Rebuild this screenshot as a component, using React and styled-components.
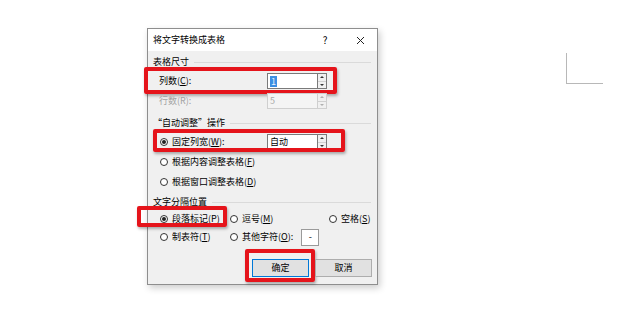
import React from "react";
import styled, { createGlobalStyle } from "styled-components";

const GlobalStyle = createGlobalStyle`
  html, body {
    margin: 0;
    padding: 0;
    background: #fff;
  }
  * {
    box-sizing: border-box;
  }
  body {
    font-family: "Noto Sans CJK SC", "Noto Sans", sans-serif;
  }
`;

const Page = styled.div`
  width: 620px;
  height: 309px;
  display: flex;
  align-items: flex-start;
  overflow: hidden;
  background: #fff;
`;

const Dialog = styled.div`
  margin: 28px 0 0 147px;
  width: 231px;
  height: 257px;
  border: 1px solid #8e8e8e;
  background: #f0f0f0;
  box-shadow: 2px 3px 7px rgba(0, 0, 0, 0.2);
  display: flex;
  flex-direction: column;
  font-size: 9px;
  line-height: 12px;
  color: #000;
`;

const TitleBar = styled.div`
  height: 22px;
  background: #fff;
  display: flex;
  align-items: center;
  padding: 0 7px 0 5px;
`;

const Title = styled.div`
  flex: 1;
`;

const TitleButton = styled.div`
  width: 20px;
  height: 16px;
  display: flex;
  align-items: center;
  justify-content: center;
  margin-left: ${(p) => p.$gap || 0}px;
  font-size: 10px;
`;

const Body = styled.div`
  flex: 1;
  display: flex;
  flex-direction: column;
  padding-top: 5px;
`;

const SectionHead = styled.div`
  display: flex;
  align-items: center;
  height: 12px;
  padding: 0 6px 0 5px;
  margin-top: ${(p) => p.$top || 0}px;

  &::after {
    content: "";
    flex: 1;
    height: 1px;
    margin-left: 5px;
    background: #dadada;
  }
`;

const FieldRow = styled.div`
  position: relative;
  display: flex;
  align-items: center;
  height: ${(p) => p.$h || 20}px;
  padding-left: ${(p) => p.$indent || 11}px;
  margin-top: ${(p) => p.$top || 0}px;
`;

const FieldLabel = styled.div`
  width: ${(p) => p.$w || 108}px;
  color: ${(p) => (p.$disabled ? "#a3a3a3" : "#000")};
`;

const SpinBox = styled.div`
  display: flex;
  height: 16px;
`;

const SpinInput = styled.div`
  width: 50px;
  height: 16px;
  border: 1px solid ${(p) => (p.$disabled ? "#cfcfcf" : "#7a7a7a")};
  border-right: none;
  background: ${(p) => (p.$disabled ? "#f4f4f4" : "#fff")};
  color: ${(p) => (p.$disabled ? "#a8a8a8" : "#000")};
  padding-left: 2px;
  display: flex;
  align-items: center;
`;

const Selected = styled.span`
  background: #3c8fe3;
  color: #eaf3fd;
  padding: 0 1px;
  line-height: 11px;
`;

const Spinner = styled.div`
  width: 10px;
  height: 16px;
  border: 1px solid ${(p) => (p.$disabled ? "#cfcfcf" : "#7a7a7a")};
  background: #f0f0f0;
  display: flex;
  flex-direction: column;
`;

const SpinHalf = styled.div`
  flex: 1;
  display: flex;
  align-items: center;
  justify-content: center;
  border-top: ${(p) => (p.$down ? "1px solid #d0d0d0" : "none")};
`;

const Arrow = styled.div`
  width: 0;
  height: 0;
  border-left: 2px solid transparent;
  border-right: 2px solid transparent;
  ${(p) =>
    p.$down
      ? `border-top: 2px solid ${p.$disabled ? "#b0b0b0" : "#333"};`
      : `border-bottom: 2px solid ${p.$disabled ? "#b0b0b0" : "#333"};`}
`;

const RadioWrap = styled.div`
  display: flex;
  align-items: center;
  position: relative;
`;

const RadioCircle = styled.div`
  width: 8px;
  height: 8px;
  border-radius: 50%;
  border: 1px solid #333;
  background: #fff;
  display: flex;
  align-items: center;
  justify-content: center;
  margin-right: 4px;

  &::after {
    content: "";
    width: 4px;
    height: 4px;
    border-radius: 50%;
    background: ${(p) => (p.$checked ? "#222" : "transparent")};
  }
`;

const SplitGrid = styled.div`
  display: grid;
  grid-template-columns: 70px 99px 1fr;
  grid-auto-rows: 18px;
  align-items: center;
  padding-left: 12px;
  margin-top: 2px;
`;

const SmallInput = styled.div`
  width: 18px;
  height: 17px;
  margin-left: 8px;
  border: 1px solid #9a9a9a;
  background: #fff;
  display: flex;
  align-items: center;
  justify-content: center;
`;

const ButtonRow = styled.div`
  display: flex;
  justify-content: flex-end;
  gap: 6px;
  padding-right: 5px;
  margin-top: 13px;
`;

const Button = styled.div`
  position: relative;
  width: 57px;
  height: 18px;
  display: flex;
  align-items: center;
  justify-content: center;
  background: #e1e1e1;
  border: 1px solid ${(p) => (p.$primary ? "#0078d7" : "#adadad")};
`;

const Highlight = styled.div`
  position: absolute;
  border: 4px solid #e5141b;
  border-radius: 2px;
  box-shadow: 1px 2px 3px rgba(0, 0, 0, 0.3);
  pointer-events: none;
`;

const PageCorner = styled.div`
  margin: 53px 0 0 188px;
  width: 37px;
  height: 31px;
  border-left: 1px solid #b8b8b8;
  border-bottom: 1px solid #b8b8b8;
`;

const Close = () => (
  <svg width="9" height="9" viewBox="0 0 9 9">
    <path d="M1 1 L8 8 M8 1 L1 8" stroke="#222" strokeWidth="1" />
  </svg>
);

const Spin = ({ value, disabled, selected }) => (
  <SpinBox>
    <SpinInput $disabled={disabled}>
      {selected ? <Selected>{value}</Selected> : value}
    </SpinInput>
    <Spinner $disabled={disabled}>
      <SpinHalf>
        <Arrow $disabled={disabled} />
      </SpinHalf>
      <SpinHalf $down>
        <Arrow $down $disabled={disabled} />
      </SpinHalf>
    </Spinner>
  </SpinBox>
);

const Radio = ({ checked, children, mark }) => (
  <RadioWrap>
    <RadioCircle $checked={checked} />
    <span>{children}</span>
    {mark}
  </RadioWrap>
);

const box = (left, top, width, height) => ({ left, top, width, height });

export default function App() {
  return (
    <Page>
      <GlobalStyle />
      <Dialog>
        <TitleBar>
          <Title>将文字转换成表格</Title>
          <TitleButton>?</TitleButton>
          <TitleButton $gap={15}>
            <Close />
          </TitleButton>
        </TitleBar>
        <Body>
          <SectionHead>表格尺寸</SectionHead>
          <FieldRow $top={3}>
            <FieldLabel>
              列数(<u>C</u>):
            </FieldLabel>
            <Spin value="1" selected />
            <Highlight style={box(-4, -4, 193, 27)} />
          </FieldRow>
          <FieldRow>
            <FieldLabel $disabled>行数(R):</FieldLabel>
            <Spin value="5" disabled />
          </FieldRow>

          <SectionHead $top={6}>“自动调整”操作</SectionHead>
          <FieldRow $top={3} $indent={12}>
            <FieldLabel $w={107}>
              <Radio checked>
                固定列宽(<u>W</u>):
              </Radio>
            </FieldLabel>
            <Spin value="自动" />
            <Highlight style={box(5, -3, 192, 23)} />
          </FieldRow>
          <FieldRow $indent={12}>
            <Radio>
              根据内容调整表格(<u>F</u>)
            </Radio>
          </FieldRow>
          <FieldRow $indent={12} $h={19}>
            <Radio>
              根据窗口调整表格(<u>D</u>)
            </Radio>
          </FieldRow>

          <SectionHead $top={5}>文字分隔位置</SectionHead>
          <SplitGrid>
            <Radio checked mark={<Highlight style={box(-23, -7, 90, 21)} />}>
              段落标记(<u>P</u>)
            </Radio>
            <Radio>
              逗号(<u>M</u>)
            </Radio>
            <Radio>
              空格(<u>S</u>)
            </Radio>
            <Radio>
              制表符(<u>T</u>)
            </Radio>
            <RadioWrap>
              <RadioCircle />
              <span>
                其他字符(<u>O</u>):
              </span>
              <SmallInput>-</SmallInput>
            </RadioWrap>
          </SplitGrid>

          <ButtonRow>
            <Button $primary>
              确定
              <Highlight style={box(-8, -11, 70, 33)} />
            </Button>
            <Button>取消</Button>
          </ButtonRow>
        </Body>
      </Dialog>
      <PageCorner />
    </Page>
  );
}
